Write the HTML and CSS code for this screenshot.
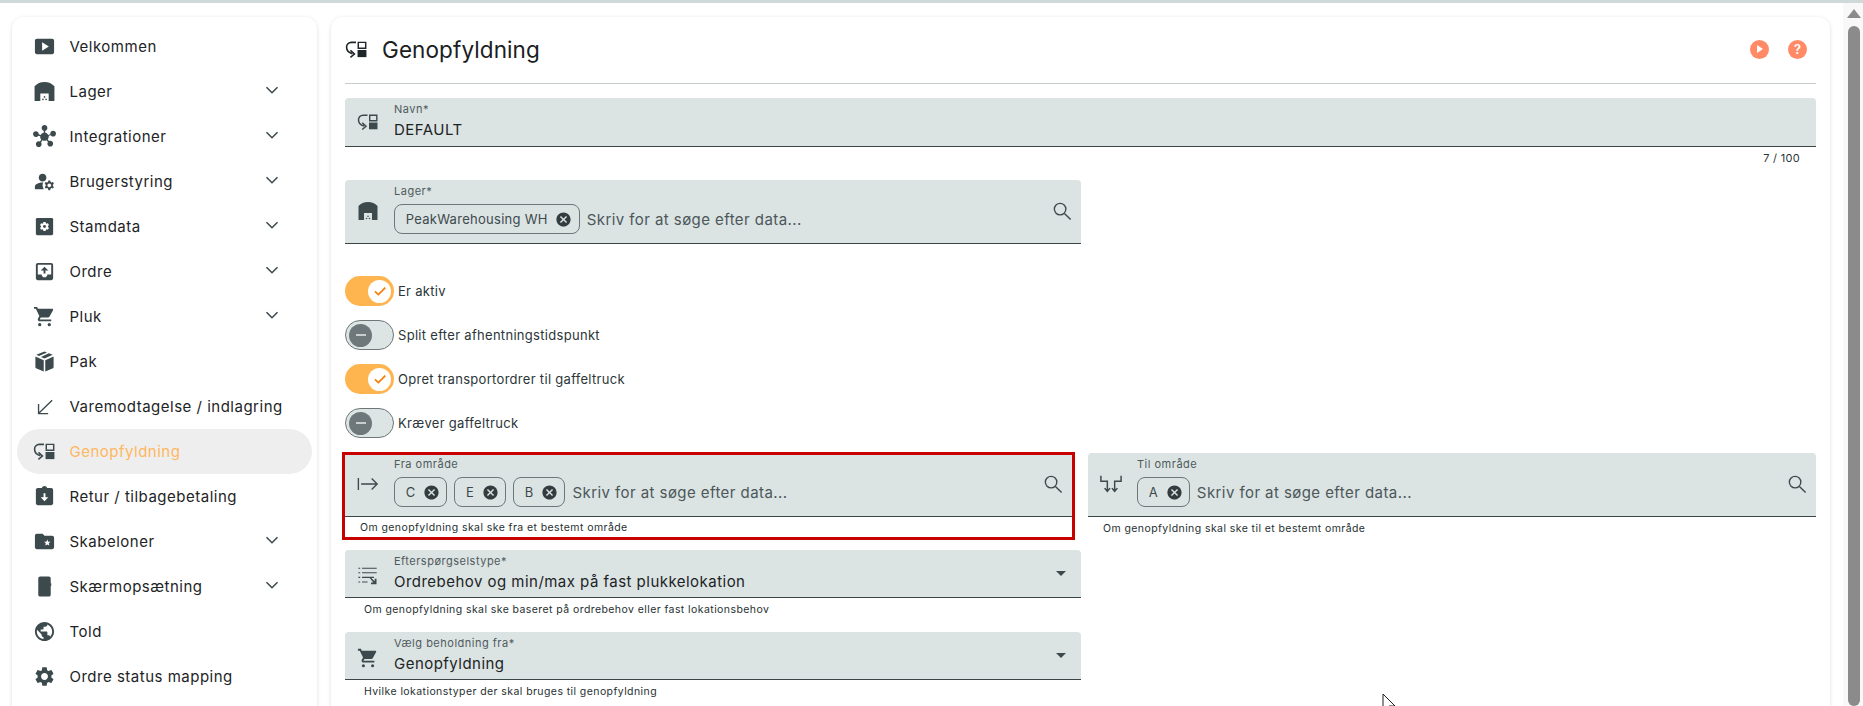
FILE: index.html
```html
<!DOCTYPE html>
<html lang="da">
<head>
<meta charset="utf-8">
<title>Genopfyldning</title>
<link rel="stylesheet" href="styles.css">
</head>
<body>
<svg class="defs" width="0" height="0" aria-hidden="true">
  <symbol id="i-play" viewBox="0 0 24 24"><path d="M20 4H4c-1.1 0-2 .9-2 2v12c0 1.1.9 2 2 2h16c1.1 0 2-.9 2-2V6c0-1.1-.9-2-2-2zM9.5 16.5v-9l7 4.5-7 4.5z"/></symbol>
  <symbol id="i-wh" viewBox="1 1 22 22"><path fill-rule="evenodd" d="M12 3c4 0 7 1.5 9.500 4v13.500a.5.5 0 0 1-.5.5H3a.5.5 0 0 1-.5-.5V7C5 4.500 8 3 12 3zM8 14v7h8v-7z"/><circle cx="10.500" cy="19.500" r=".8"/><circle cx="13.500" cy="19.500" r=".8"/><circle cx="12" cy="17.200" r=".8"/></symbol>
  <symbol id="i-hub" viewBox="0 0 24 24"><path d="M8.400 18.200c.38.5.6 1.120.6 1.800 0 1.660-1.340 3-3 3s-3-1.340-3-3 1.340-3 3-3c.44 0 .85.09 1.230.26l1.410-1.770c-.92-1.030-1.290-2.390-1.090-3.690l-2.030-.68c-.54.83-1.460 1.380-2.520 1.380-1.660 0-3-1.340-3-3s1.340-3 3-3 3 1.340 3 3c0 .07 0 .14-.01.21l2.030.68c.64-1.210 1.820-2.090 3.220-2.320V5.910C9.960 5.570 9 4.400 9 3c0-1.660 1.340-3 3-3s3 1.340 3 3c0 1.400-.96 2.570-2.250 2.910v2.160c1.400.23 2.580 1.110 3.220 2.320l2.030-.68V9c0-1.660 1.340-3 3-3s3 1.340 3 3-1.340 3-3 3c-1.060 0-1.980-.55-2.520-1.370l-2.030.68c.2 1.290-.16 2.650-1.090 3.690l1.410 1.770c.38-.17.79-.27 1.230-.27 1.660 0 3 1.340 3 3s-1.340 3-3 3-3-1.340-3-3c0-.68.22-1.300.6-1.800l-1.410-1.770c-1.350.75-3.010.76-4.370 0L8.400 18.200z"/></symbol>
  <symbol id="i-users" viewBox="0 0 24 24"><path d="M10 12c2.210 0 4-1.790 4-4s-1.790-4-4-4-4 1.790-4 4 1.790 4 4 4zM10.670 13.020C10.450 13.010 10.230 13 10 13c-2.420 0-4.680.67-6.610 1.820-.88.52-1.390 1.500-1.390 2.530V20h9.260c-.79-1.130-1.260-2.510-1.260-4 0-1.070.25-2.070.67-2.980zM20.750 16c0-.22-.03-.42-.06-.63l1.140-1.010-1-1.730-1.450.49c-.32-.27-.68-.48-1.080-.63L18 11h-2l-.3 1.490c-.4.15-.76.36-1.080.63l-1.450-.49-1 1.730 1.140 1.010c-.03.21-.06.41-.06.63s.03.42.06.63l-1.140 1.010 1 1.730 1.450-.49c.32.27.68.48 1.080.63L16 21h2l.3-1.490c.4-.15.76-.36 1.080-.63l1.450.49 1-1.730-1.140-1.010c.03-.21.06-.41.06-.63zM17 18c-1.100 0-2-.9-2-2s.9-2 2-2 2 .9 2 2-.9 2-2 2z"/></symbol>
  <symbol id="i-data" viewBox="0 0 24 24"><rect x="3" y="3" width="18" height="18" rx="1.500"/><path fill="#fff" transform="translate(6 6) scale(.5)" d="M19.140 12.940c.04-.3.06-.61.06-.94 0-.32-.02-.64-.07-.94l2.030-1.580c.18-.14.23-.41.12-.61l-1.920-3.320c-.12-.22-.37-.29-.59-.22l-2.390.96c-.5-.38-1.030-.7-1.620-.94l-.36-2.540c-.04-.24-.24-.41-.48-.41h-3.840c-.24 0-.43.17-.47.41l-.36 2.540c-.59.24-1.130.57-1.620.94l-2.390-.96c-.22-.08-.47 0-.59.22L2.740 8.870c-.12.21-.08.47.12.61l2.030 1.580c-.05.3-.09.63-.09.94s.02.64.07.94l-2.030 1.580c-.18.14-.23.41-.12.61l1.920 3.320c.12.22.37.29.59.22l2.390-.96c.5.38 1.030.7 1.620.94l.36 2.540c.05.24.24.41.48.41h3.840c.24 0 .44-.17.47-.41l.36-2.540c.59-.24 1.130-.56 1.620-.94l2.390.96c.22.08.47 0 .59-.22l1.920-3.320c.12-.22.07-.47-.12-.61l-2.010-1.580z"/><circle cx="12" cy="12" r="1.500"/></symbol>
  <symbol id="i-outbox" viewBox="0 0 24 24"><path d="M19 3H5c-1.100 0-2 .9-2 2v14c0 1.100.9 2 2 2h14c1.100 0 2-.9 2-2V5c0-1.100-.9-2-2-2zm0 12h-4c0 1.660-1.350 3-3 3s-3-1.340-3-3H5V5h14v10zM8 11h3v3h2v-3h3l-4-4z"/></symbol>
  <symbol id="i-cart" viewBox="0 0 24 24"><path d="M1 2v2h2l3.600 7.590-1.350 2.450c-.16.28-.25.61-.25.96 0 1.100.9 2 2 2h12v-2H7.420c-.14 0-.25-.11-.25-.25l.03-.12.9-1.630h7.450c.75 0 1.410-.41 1.750-1.030l3.580-6.490c.08-.14.12-.31.12-.48 0-.55-.45-1-1-1H5.210l-.94-2H1z"/><circle cx="7" cy="20.500" r="1.700"/><circle cx="17" cy="20.500" r="1.700"/></symbol>
  <symbol id="i-box" viewBox="0 0 24 24"><path d="M12 1.500l2.600 1.100-8.300 3.700L3.400 5zM16.500 3.400L20.600 5 12 8.900 8.300 7.200zM2.500 6.700l8.700 3.900v11.900l-8-3.500a1 1 0 0 1-.7-1zM21.500 6.700V18a1 1 0 0 1-.7 1l-8 3.500V10.600z"/></symbol>
  <symbol id="i-sw" viewBox="0 0 24 24"><path fill="none" stroke="currentColor" stroke-width="1.400" d="M20 5.500L6 19M5.800 9.500v10h10"/></symbol>
  <symbol id="i-refill" viewBox="1 1 22 22"><path fill-rule="evenodd" d="M13 4.500h8.500v7H13zM14.400 5.900v4.200h5.700V5.900z"/><path d="M13 12.500h8.500V19.300H13z"/><path fill="none" stroke="currentColor" stroke-width="1.500" d="M11.500 5.200H7a4.500 4.500 0 0 0-4.500 4.500c0 3 2 5.500 5.500 6.300M6.200 12.800L10 16.300l-3.800 3.200"/></symbol>
  <symbol id="i-ret" viewBox="0 0 24 24"><path fill-rule="evenodd" d="M19 3h-4.180C14.400 1.840 13.300 1 12 1c-1.300 0-2.400.84-2.820 2H5c-1.100 0-2 .9-2 2v14c0 1.100.9 2 2 2h14c1.100 0 2-.9 2-2V5c0-1.100-.9-2-2-2zm-8 5.500v4.300H8l4 4.200 4-4.200h-3V8.500z"/></symbol>
  <symbol id="i-folder" viewBox="0 0 24 24"><path d="M20 6h-8l-2-2H4c-1.100 0-1.990.9-1.990 2L2 18c0 1.100.9 2 2 2h16c1.100 0 2-.9 2-2V8c0-1.100-.9-2-2-2zm-3 10.300l-2.100-1.200-2.100 1.200.55-2.350-1.820-1.580 2.400-.2.97-2.220.96 2.220 2.400.2-1.820 1.580z"/></symbol>
  <symbol id="i-phone" viewBox="0 0 24 24"><path d="M7.500 1.500h9a2 2 0 0 1 2 2v5h.5v3h-.5v9a2 2 0 0 1-2 2h-9a2 2 0 0 1-2-2v-17a2 2 0 0 1 2-2z"/></symbol>
  <symbol id="i-globe" viewBox="0 0 24 24"><path d="M12 2C6.480 2 2 6.480 2 12s4.480 10 10 10 10-4.480 10-10S17.520 2 12 2zm-1 17.930c-3.950-.49-7-3.850-7-7.930 0-.62.08-1.210.21-1.790L9 15v1c0 1.100.9 2 2 2v1.930zm6.900-2.540c-.26-.81-1-1.390-1.900-1.390h-1v-3c0-.55-.45-1-1-1H8v-2h2c.55 0 1-.45 1-1V7h2c1.100 0 2-.9 2-2v-.41c2.930 1.190 5 4.060 5 7.410 0 2.080-.8 3.970-2.100 5.390z"/></symbol>
  <symbol id="i-gear" viewBox="0 0 24 24"><path d="M19.140 12.940c.04-.3.06-.61.06-.94 0-.32-.02-.64-.07-.94l2.030-1.580c.18-.14.23-.41.12-.61l-1.920-3.320c-.12-.22-.37-.29-.59-.22l-2.390.96c-.5-.38-1.030-.7-1.620-.94l-.36-2.540c-.04-.24-.24-.41-.48-.41h-3.840c-.24 0-.43.17-.47.41l-.36 2.540c-.59.24-1.130.57-1.620.94l-2.390-.96c-.22-.08-.47 0-.59.22L2.740 8.870c-.12.21-.08.47.12.61l2.030 1.580c-.05.3-.09.63-.09.94s.02.64.07.94l-2.030 1.580c-.18.14-.23.41-.12.61l1.920 3.320c.12.22.37.29.59.22l2.390-.96c.5.38 1.030.7 1.620.94l.36 2.540c.05.24.24.41.48.41h3.840c.24 0 .44-.17.47-.41l.36-2.540c.59-.24 1.130-.56 1.620-.94l2.390.96c.22.08.47 0 .59-.22l1.920-3.320c.12-.22.07-.47-.12-.61l-2.010-1.580zM12 15.600c-1.980 0-3.600-1.620-3.600-3.600s1.620-3.600 3.600-3.600 3.600 1.620 3.600 3.600-1.620 3.600-3.600 3.600z"/></symbol>
  <symbol id="i-chev" viewBox="0 0 24 24"><path fill="none" stroke="currentColor" stroke-width="1.700" d="M6 9l6 6 6-6"/></symbol>
  <symbol id="i-close" viewBox="0 0 24 24"><path d="M12 2C6.470 2 2 6.470 2 12s4.470 10 10 10 10-4.470 10-10S17.530 2 12 2zm5 13.590L15.590 17 12 13.410 8.410 17 7 15.590 10.590 12 7 8.410 8.410 7 12 10.590 15.590 7 17 8.410 13.410 12 17 15.590z"/></symbol>
  <symbol id="i-search" viewBox="0 0 24 24"><circle cx="9.500" cy="9.500" r="6" fill="none" stroke="currentColor" stroke-width="1.400"/><path fill="none" stroke="currentColor" stroke-width="1.500" d="M14 14l6.500 6.300"/></symbol>
  <symbol id="i-from" viewBox="0 0 24 24"><path fill="none" stroke="currentColor" stroke-width="1.500" d="M1.500 5.500v13M4.500 12H22M16 6l6 6-6 6"/></symbol>
  <symbol id="i-to" viewBox="0 0 24 24"><path fill="none" stroke="currentColor" stroke-width="1.600" d="M1 3v6h7v11M5 16.500L8 20l3-3.500M23 3v6h-7v11M13 16.500l3 3.500 3-3.500"/></symbol>
  <symbol id="i-list" viewBox="0 0 24 24"><path fill="none" stroke="currentColor" stroke-width="1.200" d="M1.500 3.500h2M5.500 3.500h16M1.500 8.500h2M5.500 8.500h16M1.500 13.500h2M5.500 13.500h13M1.500 18.500h2M5.500 18.500h6"/><path d="M14 14.500l1-1 4.300 4.200V15h2v6h-6v-2h2.600z"/></symbol>
  <symbol id="i-check" viewBox="0 0 24 24"><path fill="none" stroke="currentColor" stroke-width="2.400" d="M4.500 12.500l5 5L20 7"/></symbol>
  <symbol id="i-caret" viewBox="0 0 24 24"><path d="M7 10l5 5 5-5z"/></symbol>
</svg>

<div class="topline"></div>
<div class="page">
  <nav class="sidebar">
    <a class="item"><svg class="nav-ico"><use href="#i-play"/></svg><span class="item-label">Velkommen</span></a>
    <a class="item"><svg class="nav-ico"><use href="#i-wh"/></svg><span class="item-label">Lager</span><svg class="chev"><use href="#i-chev"/></svg></a>
    <a class="item"><svg class="nav-ico"><use href="#i-hub"/></svg><span class="item-label">Integrationer</span><svg class="chev"><use href="#i-chev"/></svg></a>
    <a class="item"><svg class="nav-ico"><use href="#i-users"/></svg><span class="item-label">Brugerstyring</span><svg class="chev"><use href="#i-chev"/></svg></a>
    <a class="item"><svg class="nav-ico"><use href="#i-data"/></svg><span class="item-label">Stamdata</span><svg class="chev"><use href="#i-chev"/></svg></a>
    <a class="item"><svg class="nav-ico"><use href="#i-outbox"/></svg><span class="item-label">Ordre</span><svg class="chev"><use href="#i-chev"/></svg></a>
    <a class="item"><svg class="nav-ico"><use href="#i-cart"/></svg><span class="item-label">Pluk</span><svg class="chev"><use href="#i-chev"/></svg></a>
    <a class="item"><svg class="nav-ico"><use href="#i-box"/></svg><span class="item-label">Pak</span></a>
    <a class="item"><svg class="nav-ico"><use href="#i-sw"/></svg><span class="item-label">Varemodtagelse / indlagring</span></a>
    <a class="item active"><svg class="nav-ico"><use href="#i-refill"/></svg><span class="item-label">Genopfyldning</span></a>
    <a class="item"><svg class="nav-ico"><use href="#i-ret"/></svg><span class="item-label">Retur / tilbagebetaling</span></a>
    <a class="item"><svg class="nav-ico"><use href="#i-folder"/></svg><span class="item-label">Skabeloner</span><svg class="chev"><use href="#i-chev"/></svg></a>
    <a class="item"><svg class="nav-ico"><use href="#i-phone"/></svg><span class="item-label">Skærmopsætning</span><svg class="chev"><use href="#i-chev"/></svg></a>
    <a class="item"><svg class="nav-ico"><use href="#i-globe"/></svg><span class="item-label">Told</span></a>
    <a class="item"><svg class="nav-ico"><use href="#i-gear"/></svg><span class="item-label">Ordre status mapping</span></a>
  </nav>

  <main class="content">
    <header class="head">
      <svg class="head-ico"><use href="#i-refill"/></svg>
      <h1 class="title">Genopfyldning</h1>
      <span class="round-btn round-gap"><i class="tri"></i></span>
      <span class="round-btn">?</span>
    </header>

    <div class="field field-name">
      <svg class="f-ico"><use href="#i-refill"/></svg>
      <div class="f-body"><div class="f-label">Navn*</div><div class="f-value">DEFAULT</div></div>
    </div>
    <div class="counter">7 / 100</div>

    <div class="field field-half field-chips">
      <svg class="f-ico"><use href="#i-wh"/></svg>
      <div class="f-body">
        <div class="f-label">Lager*</div>
        <div class="chips">
          <span class="chip">PeakWarehousing WH<svg class="chip-x"><use href="#i-close"/></svg></span>
          <span class="ph">Skriv for at søge efter data...</span>
        </div>
      </div>
      <svg class="search"><use href="#i-search"/></svg>
    </div>

    <div class="toggles">
      <div class="tg-row"><span class="tg on"><span class="knob"><svg class="tg-check"><use href="#i-check"/></svg></span></span><span class="tg-label">Er aktiv</span></div>
      <div class="tg-row"><span class="tg off"><span class="knob"></span></span><span class="tg-label">Split efter afhentningstidspunkt</span></div>
      <div class="tg-row"><span class="tg on"><span class="knob"><svg class="tg-check"><use href="#i-check"/></svg></span></span><span class="tg-label">Opret transportordrer til gaffeltruck</span></div>
      <div class="tg-row"><span class="tg off"><span class="knob"></span></span><span class="tg-label">Kræver gaffeltruck</span></div>
    </div>

    <div class="area-row">
      <div class="area-from">
        <div class="field field-chips">
          <svg class="f-ico"><use href="#i-from"/></svg>
          <div class="f-body">
            <div class="f-label">Fra område</div>
            <div class="chips">
              <span class="chip">C<svg class="chip-x"><use href="#i-close"/></svg></span>
              <span class="chip">E<svg class="chip-x"><use href="#i-close"/></svg></span>
              <span class="chip">B<svg class="chip-x"><use href="#i-close"/></svg></span>
              <span class="ph">Skriv for at søge efter data...</span>
            </div>
          </div>
          <svg class="search"><use href="#i-search"/></svg>
        </div>
        <div class="hint hint-from">Om genopfyldning skal ske fra et bestemt område</div>
      </div>
      <div class="area-to">
        <div class="field field-chips">
          <svg class="f-ico"><use href="#i-to"/></svg>
          <div class="f-body">
            <div class="f-label">Til område</div>
            <div class="chips">
              <span class="chip">A<svg class="chip-x"><use href="#i-close"/></svg></span>
              <span class="ph">Skriv for at søge efter data...</span>
            </div>
          </div>
          <svg class="search"><use href="#i-search"/></svg>
        </div>
        <div class="hint hint-to">Om genopfyldning skal ske til et bestemt område</div>
      </div>
    </div>

    <div class="field field-half field-select">
      <svg class="f-ico"><use href="#i-list"/></svg>
      <div class="f-body"><div class="f-label">Efterspørgselstype*</div><div class="f-value">Ordrebehov og min/max på fast plukkelokation</div></div>
      <svg class="caret"><use href="#i-caret"/></svg>
    </div>
    <div class="hint hint-sel">Om genopfyldning skal ske baseret på ordrebehov eller fast lokationsbehov</div>

    <div class="field field-half field-select">
      <svg class="f-ico"><use href="#i-cart"/></svg>
      <div class="f-body"><div class="f-label">Vælg beholdning fra*</div><div class="f-value">Genopfyldning</div></div>
      <svg class="caret"><use href="#i-caret"/></svg>
    </div>
    <div class="hint hint-sel">Hvilke lokationstyper der skal bruges til genopfyldning</div>
  </main>

  <div class="scrollbar"><div class="sb-track"><i class="sb-up"></i><i class="sb-thumb"></i></div></div>
</div>
<svg class="cursor" viewBox="0 0 14 14"><path d="M1 1v17l4-4 3 6 2-1-3-6h6z" fill="#fff" stroke="#222" stroke-width="1"/></svg>
</body>
</html>
```

FILE: styles.css
```css
* { box-sizing: border-box; }
html, body { margin: 0; height: 100%; overflow: hidden; background: #fff; }
body {
  font-family: Inter, "Liberation Sans", sans-serif;
  color: #1d2426;
  position: relative;
}
.defs { position: absolute; }
.topline { height: 3px; background: #cfd9d8; flex: none; }
.page { display: flex; height: 703px; overflow: hidden; padding: 14px 0 0 12px; }

.sidebar {
  width: 305px; flex: none; height: 720px; padding: 7px 5px 0;
  background: #fff; border-radius: 12px;
  box-shadow: 0 1px 4px rgba(0,0,0,.13);
  margin-right: 14px;
}
.item { display: flex; align-items: center; height: 45px; border-radius: 23px; padding-left: 16px; font-size: 15px; letter-spacing: .5px; color: #1d2426; }
.item.active { background: #eee; color: #ffb761; }
.nav-ico { width: 23px; height: 23px; color: #3d4a4d; fill: currentColor; flex: none; margin-right: 13.5px; }
.item-label { flex: 1; }
.chev { width: 22px; height: 22px; color: #3d4a4d; fill: currentColor; margin: -4px 29px 0 0; flex: none; }

.content {
  width: 1499px; flex: none; height: 720px; padding: 0 14px;
  background: #fff; border-radius: 12px;
  box-shadow: 0 1px 4px rgba(0,0,0,.13);
}
.head { height: 67px; display: flex; align-items: center; border-bottom: 1px solid #c6cbcb; padding: 0 9px 2px 0; }
.head-ico { width: 23px; height: 23px; color: #1f2628; fill: currentColor; margin-right: 14px; }
.title { font-size: 22.5px; font-weight: 400; margin: 0; flex: 1; letter-spacing: .1px; color: #1a2022; }
.round-btn { width: 19px; height: 19px; border-radius: 50%; background: #ff8a65; color: #fff; font-size: 13px; font-weight: 600; display: flex; align-items: center; justify-content: center; }
.round-gap { margin-right: 19px; }
.tri { width: 0; height: 0; border-left: 6px solid #fff; border-top: 4px solid transparent; border-bottom: 4px solid transparent; margin-left: 1px; }

.field { display: flex; align-items: stretch; background: #dbe3e3; border-bottom: 1px solid #3a4547; border-radius: 4px 4px 0 0; position: relative; }
.field-name { margin-top: 14px; height: 49px; }
.field-half { width: 736px; }
.f-ico { width: 22px; height: 22px; color: #3d4a4d; fill: currentColor; flex: none; margin: 12.5px 15.5px 0 11.5px; }
.f-body { flex: 1; padding-top: 5px; min-width: 0; }
.f-label { font-size: 11px; letter-spacing: .5px; color: #4f5a5c; line-height: 13px; }
.f-value { font-size: 15px; letter-spacing: .47px; line-height: 20px; margin-top: 3.5px; color: #1d2426; }
.counter { height: 33px; text-align: right; padding: 5px 16px 0 0; font-size: 11px; line-height: 13px; letter-spacing: .3px; color: #2c3638; }

.field-chips { height: 64px; }
.field-chips .f-ico { margin-top: 20px; }
.chips { display: flex; align-items: center; gap: 7px; margin-top: 6px; }
.chip { display: inline-flex; align-items: center; height: 30px; border: 1px solid #6d7779; border-radius: 8px; padding: 0 6.3px 0 10.7px; font-size: 13px; letter-spacing: .28px; color: #3d4a4d; }
.chip-x { width: 17px; height: 17px; fill: #333d40; margin-left: 7.6px; flex: none; }
.ph { font-size: 15px; letter-spacing: .43px; color: #4c5759; }
.search { width: 23px; height: 23px; color: #3d4a4d; fill: currentColor; margin: 20px 7px 0 0; flex: none; }

.toggles { margin-top: 32px; display: flex; flex-direction: column; gap: 14px; }
.tg-row { display: flex; align-items: center; height: 30px; }
.tg { width: 49px; height: 30px; border-radius: 15px; display: flex; align-items: center; padding: 3px; flex: none; margin-right: 4px; }
.tg.on { background: #ffb54f; justify-content: flex-end; }
.tg.off { background: #dde4e4; border: 1px solid #6e7779; }
.knob { width: 23px; height: 23px; border-radius: 50%; display: flex; align-items: center; justify-content: center; }
.tg.on .knob { background: #fff; }
.tg.off .knob { background: #6e7779; }
.tg.off .knob::after { content: ""; width: 10px; height: 1.5px; background: #c9cfcf; }
.tg-check { width: 16px; height: 16px; color: #f57c00; fill: currentColor; }
.tg-label { font-size: 13px; letter-spacing: .3px; color: #2c3638; }

.area-row { display: flex; margin-top: 14px; }
.area-from { width: 733px; height: 88px; margin-left: -3px; margin-right: 13px; border: 3px solid #c70000; flex: none; }
.area-from .field-chips { height: 62px; border-radius: 0; }
.area-from .f-body { padding-top: 3px; }
.area-from .f-ico { margin-top: 18px; }
.area-from .search { margin-top: 18px; }
.area-to { flex: 1; padding-top: 1px; }
.hint { font-size: 10.5px; letter-spacing: .42px; line-height: 13px; color: #262f31; }
.hint-from { padding: 4px 0 0 15px; }
.hint-to { padding: 5px 0 0 15px; }
.hint-sel { padding: 5px 0 0 19px; height: 34px; }

.field-select { height: 48px; }
.field-select .f-ico { margin-top: 14.5px; }
.area-row + .field-select { margin-top: 10px; }
.caret { width: 24px; height: 24px; fill: #3d4a4d; margin: 11px 8px 0 0; flex: none; }

.scrollbar { flex: 1; margin-top: -14px; padding-left: 13px; }
.sb-track { height: 703px; width: 20px; background: #f8f8f8; position: relative; padding: 6px 0 0 5px; display: flex; flex-direction: column; }
.sb-up { width: 0; height: 0; margin-left: -1px; border-left: 7px solid transparent; border-right: 7px solid transparent; border-bottom: 9px solid #8b8b8b; }
.sb-thumb { width: 12px; height: 700px; margin-top: 8px; background: #8b8b8b; border-radius: 6px; }

.cursor { position: absolute; left: 1382px; top: 693px; width: 14px; height: 14px; overflow: hidden; }
```
